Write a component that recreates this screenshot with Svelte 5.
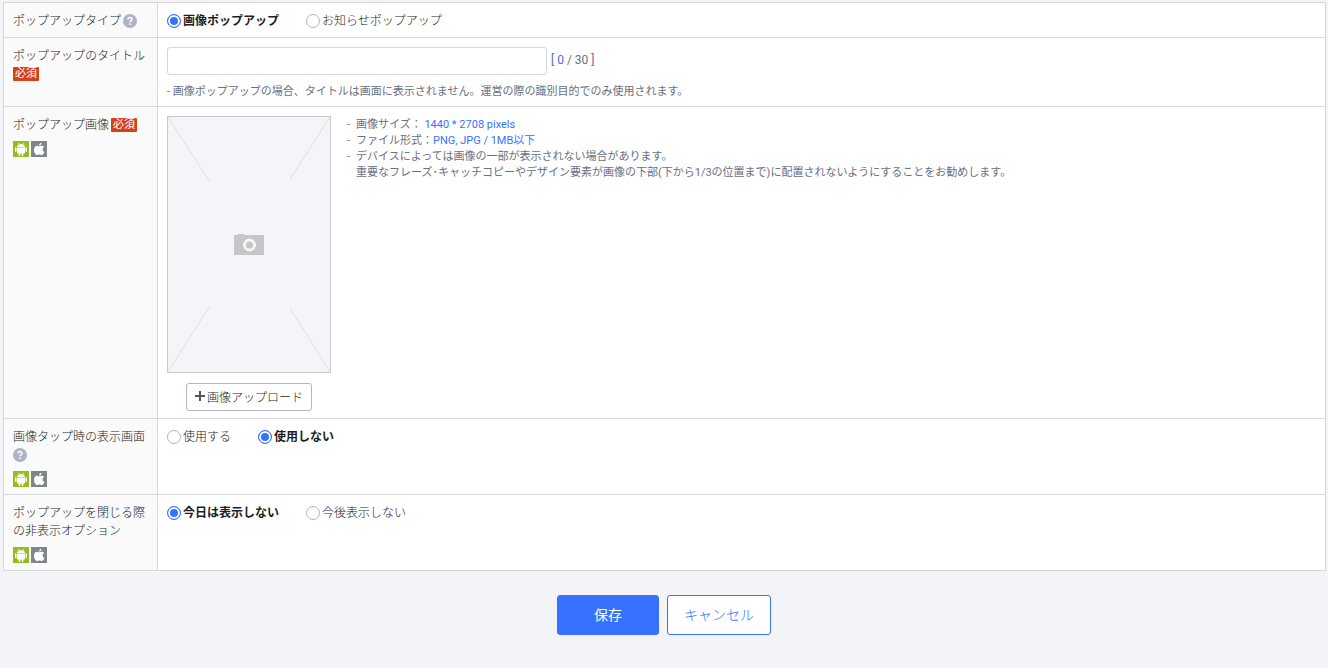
<script>
    let popupType = $state('image')
    let title = $state('')
    let tapAction = $state('none')
    let closeOption = $state('today')

    const maxTitle = 30
</script>

{#snippet help()}
    <button type="button" class="help" aria-label="ヘルプ">
        <svg viewBox="0 0 14 14" width="14" height="14">
            <circle cx="7" cy="7" r="7" fill="#afb3c7"/>
            <path d="M5 5.600C5 4.300 5.800 3.600 7 3.600s2 .7 2 1.800C9 6.700 7.100 6.700 7.100 8.300" fill="none" stroke="#fff" stroke-width="1.500"/>
            <rect x="6.300" y="9.300" width="1.600" height="1.600" fill="#fff"/>
        </svg>
    </button>
{/snippet}

{#snippet platforms()}
    <div class="platforms">
        <svg viewBox="0 0 16 16" width="16" height="16" role="img" aria-label="Android">
            <rect width="16" height="16" fill="#95bd21"/>
            <path d="M5.300 1.800l1.100 1.700M10.700 1.800L9.600 3.500" stroke="#fff" stroke-width=".7"/>
            <path d="M4 5.900C4 4.100 5.700 2.900 8 2.900s4 1.200 4 3z" fill="#fff"/>
            <path d="M4 6.400h8v5.300q0 .8-.8.8h-.9v1.800q0 .7-.8.7t-.8-.7v-1.800H7.300v1.800q0 .7-.8.7t-.8-.7v-1.800h-.9q-.8 0-.8-.8z" fill="#fff"/>
            <rect x="2" y="6.300" width="1.500" height="4.700" rx=".7" fill="#fff"/>
            <rect x="12.500" y="6.300" width="1.500" height="4.700" rx=".7" fill="#fff"/>
            <circle cx="6.300" cy="4.600" r=".45" fill="#95bd21"/>
            <circle cx="9.700" cy="4.600" r=".45" fill="#95bd21"/>
        </svg>
        <svg viewBox="0 0 16 16" width="16" height="16" role="img" aria-label="iOS">
            <rect width="16" height="16" fill="#7f8588"/>
            <path d="M10.500 1.700c.1 1.500-1.100 2.800-2.500 2.800-.1-1.400 1.100-2.600 2.500-2.800z" fill="#fff"/>
            <path d="M8.100 5.400c.6 0 1.400-.7 2.600-.7 1 0 1.900.5 2.400 1.300-2.200 1.300-1.800 4.100.4 5-.6 1.500-1.700 3.100-2.800 3.100-.9 0-1.200-.5-2.300-.5s-1.500.5-2.300.5C4.600 14.100 3 11.300 3 8.800c0-2.500 1.500-4 3.100-4 .9 0 1.500.6 2 .6z" fill="#fff"/>
        </svg>
    </div>
{/snippet}

{#snippet radios(name, legend, options, get, set)}
    <div class="radios" role="radiogroup" aria-label={legend}>
        {#each options as [value, text]}
            <label class:checked={get() === value}>
                <input type="radio" {name} {value} checked={get() === value} onchange={() => set(value)}>
                {text}
            </label>
        {/each}
    </div>
{/snippet}

<form onsubmit={(e) => e.preventDefault()}>
    <div class="settings">
        <table>
            <tbody>
                <tr>
                    <th scope="row"><span class="name">ポップアップタイプ</span>{@render help()}</th>
                    <td>
                        {@render radios('type', 'ポップアップタイプ', [['image', '画像ポップアップ'], ['notice', 'お知らせポップアップ']], () => popupType, (v) => popupType = v)}
                    </td>
                </tr>
                <tr>
                    <th scope="row"><label for="title">ポップアップのタイトル</label> <span class="required">必須</span></th>
                    <td>
                        <div class="title-field">
                            <input id="title" type="text" maxlength={maxTitle} bind:value={title}>
                            <span class="count">[ <em>{title.length}</em> / {maxTitle} ]</span>
                        </div>
                        <p class="hint">- 画像ポップアップの場合、タイトルは画面に表示されません。運営の際の識別目的でのみ使用されます。</p>
                    </td>
                </tr>
                <tr>
                    <th scope="row"><span class="name">ポップアップ画像</span><span class="required">必須</span>{@render platforms()}</th>
                    <td>
                        <div class="image-field">
                            <div class="uploader">
                                <svg class="preview" viewBox="0 0 164 257" width="164" height="257" aria-hidden="true">
                                    <rect x=".5" y=".5" width="163" height="256" fill="#f4f5f8" stroke="#c8c8c8"/>
                                    <path d="M1 1l41 64M163 1l-40 62M1 256l41-65M163 256l-40-64" stroke="#dedede" fill="none"/>
                                    <path d="M67 119h3l1-1h5l2 1h19v20H67z" fill="#c6c6c6"/>
                                    <circle cx="82.500" cy="129" r="5" fill="none" stroke="#f4f5f8" stroke-width="3"/>
                                </svg>
                                <button type="button" class="upload">
                                    <svg viewBox="0 0 10 10" width="10" height="10" aria-hidden="true">
                                        <path d="M5 0v10M0 5h10" stroke="#555" stroke-width="2"/>
                                    </svg>
                                    画像アップロード
                                </button>
                            </div>
                            <ul class="hint">
                                <li>画像サイズ： <em>1440 * 2708 pixels</em></li>
                                <li>ファイル形式：<em>PNG, JPG / 1MB以下</em></li>
                                <li>デバイスによっては画像の一部が表示されない場合があります。<br>重要なフレーズ･キャッチコピーやデザイン要素が画像の下部(下から1/3の位置まで)に配置されないようにすることをお勧めします。</li>
                            </ul>
                        </div>
                    </td>
                </tr>
                <tr>
                    <th scope="row">画像タップ時の表示画面{@render help()}{@render platforms()}</th>
                    <td>
                        {@render radios('tap', '画像タップ時の表示画面', [['use', '使用する'], ['none', '使用しない']], () => tapAction, (v) => tapAction = v)}
                    </td>
                </tr>
                <tr>
                    <th scope="row">ポップアップを閉じる際の非表示オプション{@render platforms()}</th>
                    <td>
                        {@render radios('close', '非表示オプション', [['today', '今日は表示しない'], ['forever', '今後表示しない']], () => closeOption, (v) => closeOption = v)}
                    </td>
                </tr>
            </tbody>
        </table>
    </div>

    <div class="actions">
        <button type="submit" class="save">保存</button>
        <button type="button" class="cancel">キャンセル</button>
    </div>
</form>

<style>
    :global(body) {
        background: #f3f4f8;
    }

    form, button, input {
        font-family: Roboto, "Noto Sans CJK JP", sans-serif;
    }

    form {
        padding: 2px 0 32px;
        font-size: 12px;
        line-height: 18px;
        color: #1b1e26;
    }

    .settings {
        padding: 0 2px 0 3px;
    }

    table {
        width: 100%;
        border-collapse: collapse;
        background: #fff;
    }

    th, td {
        border: 1px solid #d7d7da;
        padding: 9px 9px 6px;
        vertical-align: top;
        text-align: left;
    }

    th {
        box-sizing: border-box;
        width: 154px;
        padding-bottom: 7px;
        background: #fafafa;
        font-weight: 300;
        word-break: break-all;
    }

    .name {
        margin-right: 2px;
    }

    .help {
        display: inline-block;
        width: 14px;
        height: 14px;
        margin: 0 0 2px;
        padding: 0;
        border: 0;
        background: none;
        vertical-align: middle;
    }

    .help svg {
        display: block;
    }

    .required {
        display: inline-block;
        margin-bottom: 2px;
        padding: 0 2px;
        border-radius: 1px;
        background: #d8401c;
        color: #fff;
        font-size: 11px;
        font-weight: 400;
        line-height: 14px;
        vertical-align: middle;
    }

    .platforms {
        display: flex;
        gap: 2px;
        margin-top: 7px;
    }

    .radios {
        display: flex;
        gap: 27px;
    }

    .radios label {
        display: flex;
        align-items: center;
        gap: 2px;
        font-weight: 300;
    }

    .radios label.checked {
        font-weight: 700;
    }

    .radios input {
        appearance: none;
        width: 14px;
        height: 14px;
        margin: 0;
        border: 1px solid #b1b5c9;
        border-radius: 50%;
        background: #fff;
    }

    .radios input:checked {
        border-color: #3971ff;
        background: #3971ff;
        box-shadow: inset 0 0 0 2px #fff;
    }

    .title-field {
        display: flex;
        align-items: center;
        gap: 4px;
    }

    .title-field input {
        box-sizing: border-box;
        width: 380px;
        height: 28px;
        padding: 0 8px;
        border: 1px solid #d5d7e0;
        border-radius: 3px;
        font-size: 12px;
    }

    .count {
        padding-bottom: 2px;
        color: #687083;
    }

    em {
        color: #3971ff;
        font-style: normal;
    }

    .hint {
        margin: 0;
        padding: 0;
        font-size: 11px;
        line-height: 16px;
        color: #687083;
        list-style: none;
    }

    p.hint {
        margin-top: 9px;
    }

    ul.hint {
        margin-top: 1px;
    }

    .hint li {
        display: flow-root;
        padding-left: 9px;
    }

    .hint li::before {
        content: '-';
        float: left;
        margin-left: -9px;
    }

    .image-field {
        display: flex;
        gap: 16px;
        padding-bottom: 1px;
    }

    .uploader {
        display: flex;
        flex-direction: column;
        align-items: center;
        gap: 10px;
    }

    .preview {
        display: block;
    }

    .upload {
        display: flex;
        align-items: center;
        gap: 2px;
        height: 28px;
        padding: 0 8px 2px;
        border: 1px solid #b1b5c9;
        border-radius: 3px;
        background: #fff;
        color: #1b1e26;
        font-size: 12px;
        font-weight: 300;
    }

    .actions {
        display: flex;
        justify-content: center;
        gap: 8px;
        margin-top: 24px;
    }

    .actions button {
        height: 40px;
        padding: 0 16px 2px;
        border: 1px solid #3971ff;
        border-radius: 3px;
        font-size: 14px;
    }

    .actions .save {
        min-width: 102px;
        background: #3971ff;
        color: #fff;
    }

    .actions .cancel {
        background: #fff;
        color: #3971ff;
        font-weight: 300;
    }
</style>
